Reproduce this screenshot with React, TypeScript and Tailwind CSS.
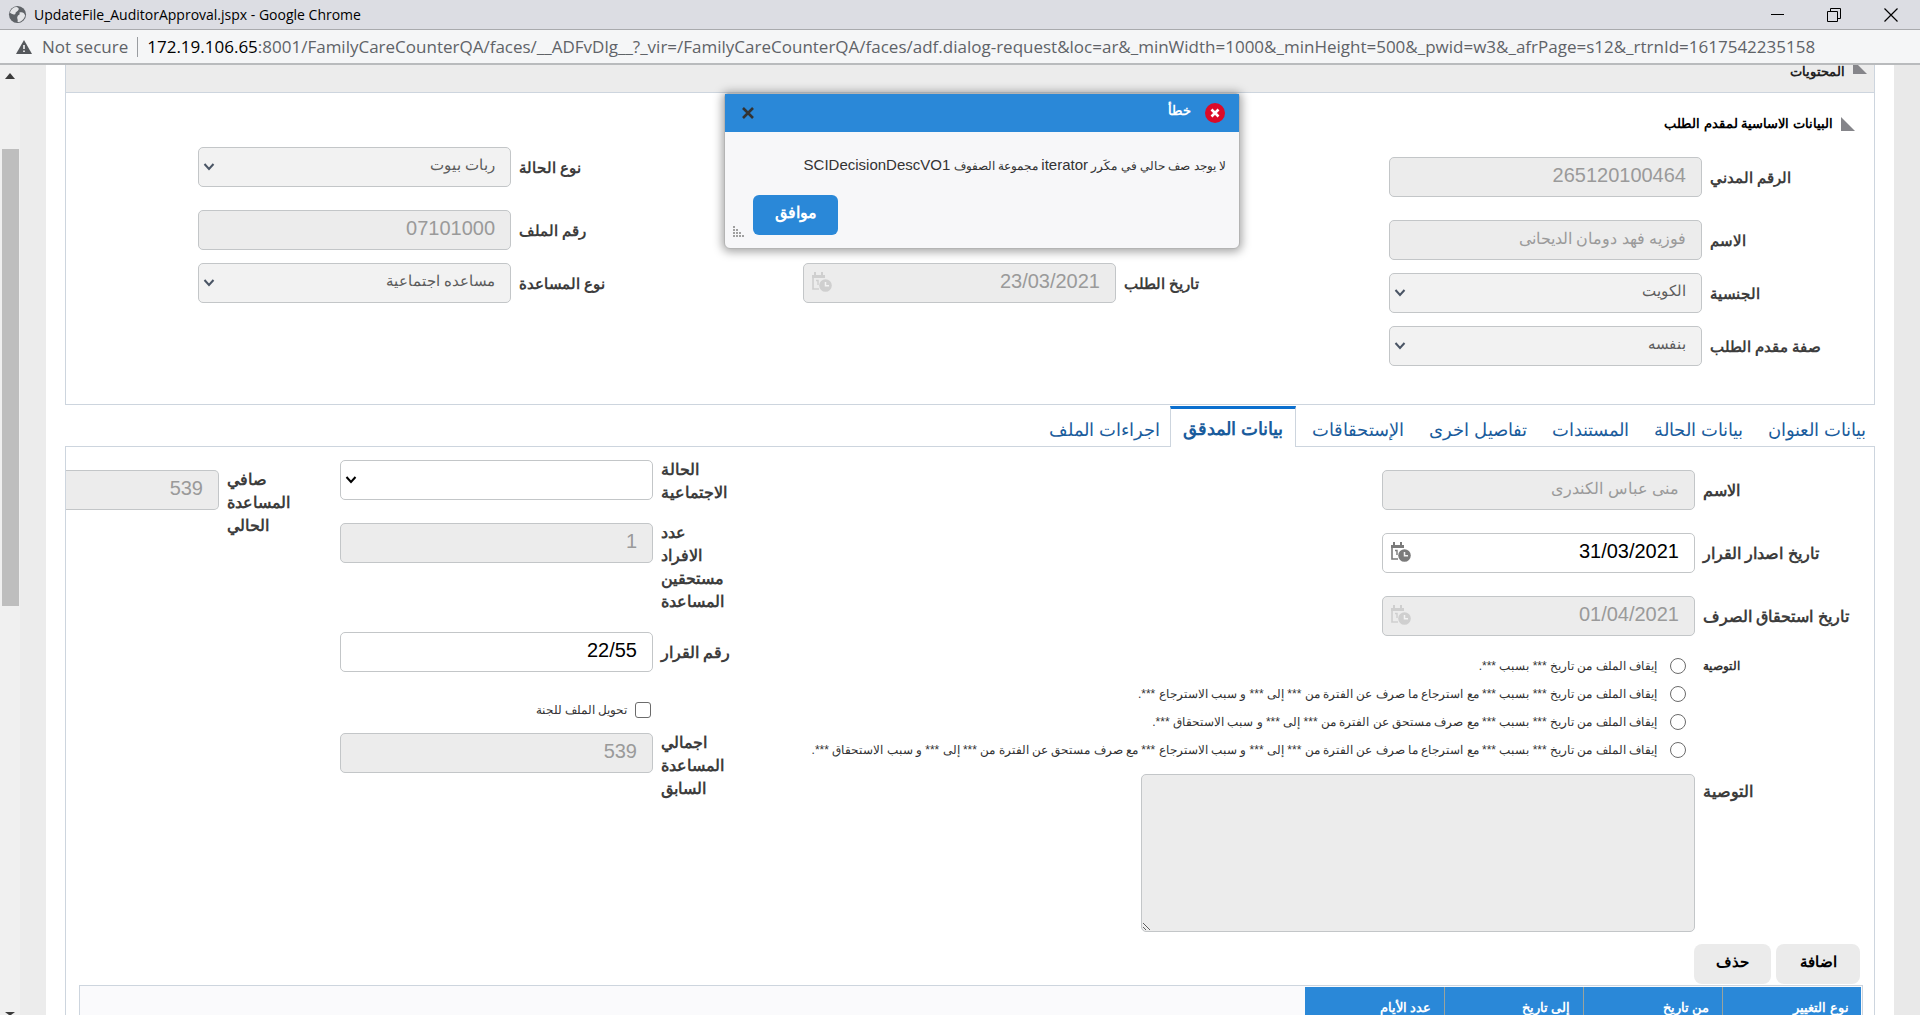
import React from 'react';

// --- Shared pieces ---
const Chevron: React.FC<{ dark?: boolean }> = ({ dark }) => (
  <svg
    className={`absolute left-[5px] top-[15px] pointer-events-none ${dark ? 'text-black' : 'text-gray-600'}`}
    width="12"
    height="10"
    viewBox="0 0 12 10"
    fill="none"
    stroke="currentColor"
    strokeWidth="2"
  >
    <path d="M1.5 2 L6 7 L10.5 2" />
  </svg>
);

const CalendarClock: React.FC<{ dim?: boolean }> = ({ dim }) => (
  <svg width="22" height="20" viewBox="0 0 22 20" className={dim ? 'text-[#cfcfcf]' : 'text-[#7b7b7b]'}>
    <path d="M2 4 V17 H8" fill="none" stroke="currentColor" strokeWidth="1.6" />
    <path d="M1 3 H14 V6 H1 Z M3 0 H5 V3 H3 Z M10 0 H12 V3 H10 Z" fill="currentColor" />
    <path d="M5 8.5 H7 V13" fill="none" stroke="currentColor" strokeWidth="1.4" />
    <circle cx="14.5" cy="13.5" r="6.3" fill="currentColor" />
    <path d="M14.5 10 V13.8 H18" fill="none" stroke="#f3f3f3" strokeWidth="1.5" />
  </svg>
);

const Triangle: React.FC = () => (
  <svg width="14" height="14" viewBox="0 0 14 14" className="shrink-0">
    <path d="M0 0 L14 14 H0 Z" fill="#85858a" />
  </svg>
);

type FieldProps = {
  id: string;
  label: string;
  value?: string;
  kind?: 'text' | 'select' | 'date';
  enabled?: boolean;
  narrow?: boolean;
  large?: boolean;
};

const Field: React.FC<FieldProps> = ({ id, label, value = '', kind = 'text', enabled, narrow, large }) => {
  const latin = /^[\d/]*$/.test(value);
  const box = `w-full h-10 rounded-[5px] border border-[#c3c6c8] pr-[15px] pb-[3px] outline-none ${
    enabled ? 'bg-white text-black' : kind === 'select' ? 'bg-[#f2f2f2] text-[#5c5c5c]' : 'bg-[#ececec] text-[#9a9a9a]'
  } ${latin ? 'text-xl' : kind === 'select' ? 'text-[15px]' : 'text-base'}`;

  return (
    <div className={`flex justify-end gap-2 ${narrow ? 'items-start' : 'items-center'}`}>
      <label
        htmlFor={id}
        className={`leading-[23px] font-bold text-[#3d3d3d] text-left ${large ? 'text-base' : 'text-[15px]'} ${
          narrow ? 'w-[68px] -mt-0.5' : 'whitespace-nowrap'
        }`}
      >
        {label}
      </label>
      <div className="relative w-[313px] shrink-0">
        {kind === 'select' ? (
          <>
            <select id={id} disabled={!enabled} defaultValue={value} className={`${box} appearance-none opacity-100`}>
              <option value={value}>{value}</option>
            </select>
            <Chevron dark={enabled} />
          </>
        ) : (
          <input id={id} type="text" disabled={!enabled} defaultValue={value} className={box} />
        )}
        {kind === 'date' && (
          <button type="button" disabled={!enabled} aria-label="اختيار التاريخ" className="absolute left-2 top-[9px]">
            <CalendarClock dim={!enabled} />
          </button>
        )}
      </div>
    </div>
  );
};

// --- Browser window chrome ---
const WindowChrome: React.FC = () => (
  <header dir="ltr" className="shrink-0 font-['Open_Sans',sans-serif]">
    <div className="h-[30px] flex items-center bg-[#dcdde3] border-b border-[#a9aaad] pl-2">
      <svg width="19" height="19" viewBox="0 0 20 20">
        <circle cx="10" cy="10" r="9" fill="#5f6368" />
        <path d="M9 2 C13 3 11 6 9 7 C7 8 9 10 6 10 C4 10 2 8 2 8 C3 4 6 2 9 2 Z" fill="#e4e5e8" />
        <path d="M12 8 C15 7 17 8 18 11 C17 15 14 18 10 18 C11 15 9 14 10 12 C11 10 13 11 12 8 Z" fill="#e4e5e8" />
      </svg>
      <span className="ml-[7px] text-sm text-black">UpdateFile_AuditorApproval.jspx - Google Chrome</span>
      <div className="ml-auto flex items-center">
        <button type="button" aria-label="Minimize" className="w-14 flex justify-center">
          <svg width="14" height="14" stroke="black"><path d="M0 6.5 H13" /></svg>
        </button>
        <button type="button" aria-label="Restore" className="w-14 flex justify-center">
          <svg width="14" height="14" fill="none" stroke="black"><path d="M0.5 3.5 H10.5 V13.5 H0.5 Z M3.5 3.5 V0.5 H13.5 V10.5 H10.5" /></svg>
        </button>
        <button type="button" aria-label="Close" className="w-[58px] flex justify-center">
          <svg width="14" height="14" stroke="black" strokeWidth="1.2"><path d="M0.5 0.5 L13.5 13.5 M13.5 0.5 L0.5 13.5" /></svg>
        </button>
      </div>
    </div>
    <div className="h-[35px] flex items-center bg-[#f5f6f7] border-b-2 border-[#b9bbbd] pl-4 text-[17px] text-[#5f6368] whitespace-nowrap">
      <svg width="16" height="14" viewBox="0 0 16 14">
        <path d="M8 0 L16 14 H0 Z" fill="#55585c" />
        <path d="M8 5 V9 M8 10.5 V12" stroke="#f5f6f7" strokeWidth="1.6" />
      </svg>
      <span className="ml-[10px]">Not secure</span>
      <span className="mx-[9px] w-px h-5 bg-[#9a9da1]"></span>
      <span>
        <span className="text-black">172.19.106.65</span>
        :8001/FamilyCareCounterQA/faces/__ADFvDlg__?_vir=/FamilyCareCounterQA/faces/adf.dialog-request&amp;loc=ar&amp;_minWidth=1000&amp;_minHeight=500&amp;_pwid=w3&amp;_afrPage=s12&amp;_rtrnId=1617542235158
      </span>
    </div>
  </header>
);

const ScrollTrack: React.FC = () => (
  <div className="w-[46px] shrink-0 bg-[#ececec] flex">
    <div className="w-5 bg-[#f0f0f0] flex flex-col items-center">
      <svg width="10" height="6" className="mt-2"><path d="M5 0 L10 6 H0 Z" fill="#3c3c3c" /></svg>
      <div className="mt-[70px] w-[17px] h-[457px] bg-[#bebebe]"></div>
      <svg width="10" height="6" className="mt-auto"><path d="M0 3 H10 L6 6 H4 Z" fill="#3c3c3c" /></svg>
    </div>
  </div>
);

// --- Applicant details ---
const ApplicantPanel: React.FC = () => (
  <section className="h-[313px] border border-[#cdd5de] pt-[19px]">
    <h2 className="flex items-center justify-start gap-2 pr-[19px] text-[13px] leading-[23px] font-bold text-black">
      <Triangle />
      البيانات الاساسية لمقدم الطلب
    </h2>
    <div className="grid grid-cols-[471fr_586fr_605fr] pr-[14px] pl-[132px]">
      <div className="flex flex-col gap-[13px] pt-[22px]">
        <Field id="civil-id" label="الرقم المدني" value="265120100464" />
        <div className="pt-[10px]">
          <Field id="name" label="الاسم" value="فوزيه فهد دومان الديحانى" />
        </div>
        <Field id="nationality" label="الجنسية" value="الكويت" kind="select" />
        <Field id="capacity" label="صفة مقدم الطلب" value="بنفسه" kind="select" />
      </div>
      <div className="pt-32">
        <Field id="request-date" label="تاريخ الطلب" value="23/03/2021" kind="date" />
      </div>
      <div className="flex flex-col gap-[13px] pt-3">
        <Field id="case-type" label="نوع الحالة" value="ربات بيوت" kind="select" />
        <div className="pt-[10px]">
          <Field id="file-no" label="رقم الملف" value="07101000" />
        </div>
        <Field id="aid-type" label="نوع المساعدة" value="مساعده اجتماعية" kind="select" />
      </div>
    </div>
  </section>
);

// --- Tabs ---
const tabs = [
  'بيانات العنوان',
  'بيانات الحالة',
  'المستندات',
  'تفاصيل اخرى',
  'الإستحقاقات',
  'بيانات المدقق',
  'اجراءات الملف',
];

const Tabs: React.FC = () => (
  <nav className="relative z-10 h-[42px] -mb-px pt-px flex pr-[9px] text-lg text-[#1a5c9c]">
    {tabs.map((tab, i) =>
      i === 5 ? (
        <button key={tab} type="button" className="ml-[10px] w-[126px] border-t-[3px] border-x border-x-[#cdd5de] border-t-[#0b6fce] bg-white font-bold pt-0.5">
          {tab}
        </button>
      ) : (
        <button key={tab} type="button" className={`pt-1.5 whitespace-nowrap ${i === 4 ? 'ml-4' : 'ml-[25px]'}`}>
          {tab}
        </button>
      )
    )}
  </nav>
);

// --- Auditor data ---
const recommendations = [
  'إيقاف الملف من تاريخ *** بسبب ***.',
  'إيقاف الملف من تاريخ *** بسبب *** مع استرجاع ما صرف عن الفترة من *** إلى *** و سبب الاسترجاع ***.',
  'إيقاف الملف من تاريخ *** بسبب *** مع صرف مستحق عن الفترة من *** إلى *** و سبب الاستحقاق ***.',
  'إيقاف الملف من تاريخ *** بسبب *** مع استرجاع ما صرف عن الفترة من *** إلى *** و سبب الاسترجاع *** مع صرف مستحق عن الفترة من *** إلى *** و سبب الاستحقاق ***.',
];

const columns = ['نوع التغيير', 'من تاريخ', 'إلى تاريخ', 'عدد الأيام'];

const AuditorPanel: React.FC = () => (
  <section className="border border-[#cdd5de] overflow-hidden">
    <div className="flex">
      <div className="w-[63%] shrink-0 pr-[14px] pt-[23px]">
        <div className="w-[478px] flex flex-col gap-[23px]">
          <Field id="auditor-name" label="الاسم" value="منى عباس الكندرى" large />
          <Field id="issue-date" label="تاريخ اصدار القرار" value="31/03/2021" kind="date" enabled large />
          <Field id="due-date" label="تاريخ استحقاق الصرف" value="01/04/2021" kind="date" large />
        </div>
        <div role="radiogroup" aria-labelledby="recommendation-label" className="mt-4 flex text-[#333]">
          <span id="recommendation-label" className="w-[165px] shrink-0 pl-2 text-left text-xs leading-7 font-semibold">
            التوصية
          </span>
          <div className="pr-[9px]">
            {recommendations.map((text, i) => (
              <label key={text} className="flex items-center h-7 gap-[13px] text-xs whitespace-nowrap">
                <input type="radio" name="recommendation" value={i} className="appearance-none size-4 shrink-0 rounded-full border border-[#6b6b6b] bg-white" />
                {text}
              </label>
            ))}
          </div>
        </div>
        <div className="mt-[10px] flex">
          <label htmlFor="notes" className="w-[165px] shrink-0 pl-2 pt-[6px] text-left text-base leading-[23px] font-bold text-[#3d3d3d]">
            التوصية
          </label>
          <textarea id="notes" disabled className="w-[554px] h-[158px] resize rounded-[5px] border border-[#c3c6c8] bg-[#ececec]"></textarea>
        </div>
      </div>
      <div className="flex-1 flex justify-end">
        <div className="flex flex-col pt-[13px] shrink-0">
          <div className="h-[63px]">
            <Field id="marital" label="الحالة الاجتماعية" kind="select" enabled narrow large />
          </div>
          <div className="h-[109px]">
            <Field id="members" label="عدد الافراد مستحقين المساعدة" value="1" narrow large />
          </div>
          <div className="h-[63px]">
            <Field id="decision-no" label="رقم القرار" value="22/55" enabled large />
          </div>
          <label className="h-[30px] mb-2 flex items-center gap-2 pr-[79px] text-xs text-[#333]">
            <input type="checkbox" className="appearance-none size-4 rounded-[3px] border border-[#6b6b6b] bg-white" />
            تحويل الملف للجنة
          </label>
          <Field id="previous-total" label="اجمالي المساعدة السابق" value="539" narrow large />
        </div>
        <div className="w-[274px] shrink-0 pt-[23px] flex justify-end gap-2">
          <label htmlFor="net" className="w-[68px] -mt-0.5 text-base leading-[23px] font-bold text-[#3d3d3d] text-left">
            صافي المساعدة الحالي
          </label>
          <input
            id="net"
            disabled
            defaultValue="539"
            className="w-[153px] h-10 rounded-r-[5px] border border-l-0 border-[#c3c6c8] bg-[#ececec] pr-[15px] pb-[3px] text-xl text-[#9a9a9a]"
          />
        </div>
      </div>
    </div>

    <div className="mt-3 flex gap-[5px] pr-[14px] text-[15px] font-bold text-black">
      <button type="button" className="w-[84px] h-10 pb-1 rounded-lg bg-[#ebebeb]">اضافة</button>
      <button type="button" className="w-[77px] h-10 pb-1 rounded-lg bg-[#ebebeb]">حذف</button>
    </div>
    <div className="mt-px mr-[11px] ml-[13px] h-20 border border-[#cdd5de] bg-[#fafafc] pt-px pr-px">
      <table className="border-collapse bg-[#2a88d8] text-white text-[13px]">
        <thead>
          <tr>
            {columns.map((name) => (
              <th key={name} className="w-[139px] h-[42px] pr-3 text-right font-bold border-l border-[#9aa39c] last:border-l-0">{name}</th>
            ))}
          </tr>
        </thead>
      </table>
    </div>
  </section>
);

// --- Error dialog ---
const ErrorDialog: React.FC = () => (
  <div role="dialog" aria-labelledby="dlg-title" className="absolute z-20 top-[93px] left-1/2 -ml-[236px] w-[516px] h-[156px] rounded-b-md rounded-t-sm border border-[#b4b4b4] bg-[#f7f7f9] shadow-[0_1px_10px_2px_rgba(0,0,0,0.35)]">
    <div className="h-[38px] flex items-center bg-[#2a88d8] pr-[14px] pl-[17px] text-white">
      <svg width="20" height="20" viewBox="0 0 20 20">
        <circle cx="10" cy="10" r="10" fill="#dc0a28" />
        <path d="M6.5 6.5 L13.5 13.5 M13.5 6.5 L6.5 13.5" stroke="white" strokeWidth="2.6" />
      </svg>
      <span id="dlg-title" className="mr-[14px] pb-1 text-[13px] font-bold">خطأ</span>
      <button type="button" aria-label="إغلاق" className="mr-auto">
        <svg width="12" height="12" stroke="#333" strokeWidth="2.6"><path d="M1 1 L11 11 M11 1 L1 11" /></svg>
      </button>
    </div>
    <p className="mt-[23px] pr-[13px] text-[#333] text-xs leading-5 whitespace-nowrap">
      لا يوجد صف حالي في مكَرر <span className="text-[15px]">iterator</span> مجموعة الصفوف <span className="text-[15px]">SCIDecisionDescVO1</span>
    </p>
    <button type="button" className="absolute left-7 bottom-[13px] w-[85px] h-10 pb-1 rounded-md bg-[#2a88d8] text-white font-bold text-base">
      موافق
    </button>
    <svg width="12" height="12" className="absolute left-2 bottom-[10px]" fill="#a0a0a0">
      <path d="M0 0h2v2H0z M0 3h2v2H0z M3 3h2v2H3z M0 6h2v2H0z M3 6h2v2H3z M6 6h2v2H6z M0 9h2v2H0z M3 9h2v2H3z M6 9h2v2H6z M9 9h2v2H9z" />
    </svg>
  </div>
);

export default function App() {
  return (
    <div dir="rtl" lang="ar" className="relative h-screen flex flex-col overflow-hidden bg-white font-['Liberation_Sans',Arial,sans-serif]">
      <WindowChrome />
      <div dir="ltr" className="flex-1 min-h-0 flex">
        <ScrollTrack />
        <main dir="rtl" className="flex-1 min-w-0 overflow-hidden px-[19px]">
          <div className="h-[27px] flex items-start gap-2 bg-[#ececec] border-x border-[#cdd5de] pr-[7px] text-[13px] leading-[14px] font-bold text-[#222]">
            <svg width="14" height="9" viewBox="0 5 14 9" className="shrink-0">
              <path d="M0 0 L14 14 H0 Z" fill="#85858a" />
            </svg>
            المحتويات
          </div>
          <ApplicantPanel />
          <Tabs />
          <AuditorPanel />
        </main>
        <div className="w-[26px] shrink-0 bg-[#e9e9e9]"></div>
      </div>
      <ErrorDialog />
    </div>
  );
}
